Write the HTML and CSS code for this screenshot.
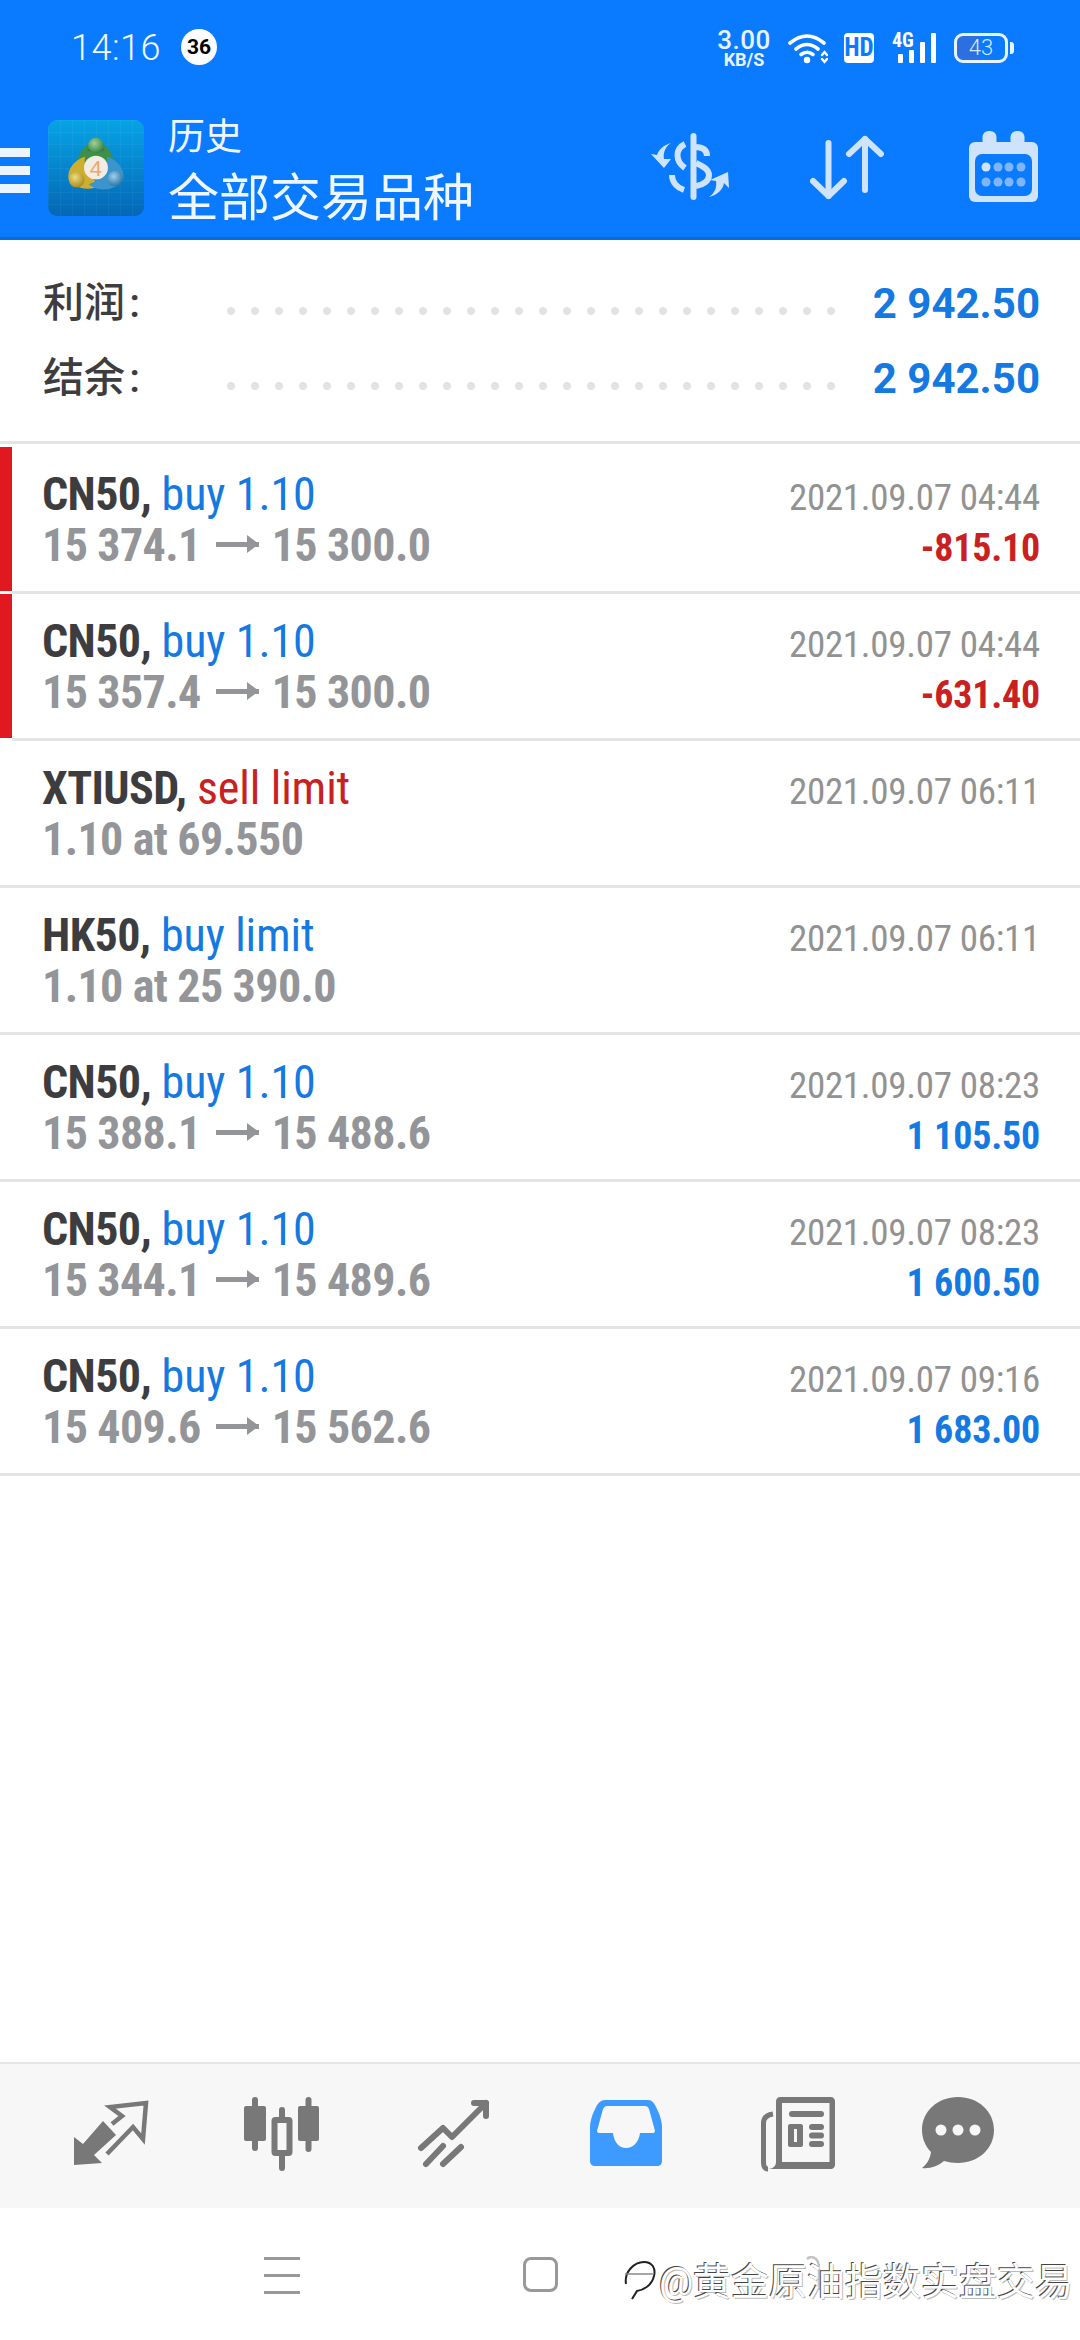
FILE: index.html
```html
<!doctype html>
<html lang="zh">
  <head>
    <meta charset="utf-8" />
    <meta name="viewport" content="width=device-width, initial-scale=1" />
    <title>历史</title>
    <link rel="stylesheet" href="styles.css">
  </head>
  <body>
    <header class="header">
      <div class="status-bar">
        <span class="clock">14:16</span>
        <span class="badge">36</span>
        <div class="status-icons">
          <div class="speed">
            <span class="speed-value">3.00</span>
            <span class="speed-unit">KB/S</span>
          </div>
          <svg class="wifi" width="40" height="31" viewBox="0 0 40 31" fill="none" stroke="#fff" stroke-width="3.6" stroke-linecap="round">
            <path d="M2 10Q19-4 36 10" />
            <path d="M8 16Q19 7 30 16" />
            <path d="M13 21.500Q19 17 25 21.500" />
            <circle cx="19" cy="27" r="3.200" fill="#fff" stroke="none" />
            <path d="M34 22l2.500-3 2.500 3M34 26l2.500 3 2.500-3" stroke-width="2.400" />
          </svg>
          <span class="hd">HD</span>
          <div class="signal">
            <span class="signal-label">4G</span>
            <span class="signal-bar bar-1"></span>
            <span class="signal-bar bar-2"></span>
            <span class="signal-bar bar-3"></span>
            <span class="signal-bar bar-4"></span>
          </div>
          <span class="battery">43</span>
        </div>
      </div>

      <div class="toolbar">
        <div class="menu-button">
          <span></span>
          <span></span>
          <span></span>
        </div>
        <svg class="app-logo" width="96" height="96" viewBox="0 0 96 96">
          <defs>
            <linearGradient id="tile" x1="0" y1="0" x2="0" y2="1">
              <stop offset="0" stop-color="#07a3e6" />
              <stop offset="1" stop-color="#0467b6" />
            </linearGradient>
            <pattern id="tileGrid" width="12" height="12" patternUnits="userSpaceOnUse">
              <path d="M12 0H0V12" fill="none" stroke="#fff" stroke-opacity="0.08" />
            </pattern>
            <radialGradient id="greenBall" cx="0.4" cy="0.35" r="0.7">
              <stop offset="0" stop-color="#9fd29a" />
              <stop offset="1" stop-color="#2f7f3c" />
            </radialGradient>
            <radialGradient id="yellowBall" cx="0.4" cy="0.35" r="0.7">
              <stop offset="0" stop-color="#efdc80" />
              <stop offset="1" stop-color="#a4881a" />
            </radialGradient>
            <radialGradient id="blueBall" cx="0.4" cy="0.35" r="0.7">
              <stop offset="0" stop-color="#9dd0ea" />
              <stop offset="1" stop-color="#1f6ea3" />
            </radialGradient>
          </defs>
          <rect width="96" height="96" rx="9" fill="url(#tile)" />
          <rect width="96" height="96" rx="9" fill="url(#tileGrid)" />
          <g transform="translate(3.800 3.500) scale(0.92)">
            <path d="M48 20C36 20 29 32 27 45 35 38 61 38 68 45 66 32 60 20 48 20Z" fill="#3f8f4a" />
            <path d="M36 36C24 40 17 50 18 60 24 72 44 74 55 66 42 62 34 50 36 36Z" fill="#cfae2c" />
            <path d="M60 36C72 40 79 50 78 60 72 72 52 76 40 66 54 62 62 50 60 36Z" fill="#3c94cc" />
            <path d="M39 28C44 31 52 31 57 28" fill="none" stroke="#0b5c8c" stroke-opacity="0.5" stroke-width="2" />
            <circle cx="48" cy="24" r="8.500" fill="url(#greenBall)" />
            <circle cx="27" cy="61" r="8.500" fill="url(#yellowBall)" />
            <circle cx="69" cy="60" r="8.500" fill="url(#blueBall)" />
            <circle cx="48" cy="48" r="13" fill="#f1ece4" />
            <text class="logo-digit" x="48" y="57" text-anchor="middle">4</text>
          </g>
        </svg>
        <div class="titles">
          <span class="title-small">历史</span>
          <span class="title-large">全部交易品种</span>
        </div>
        <div class="actions">
          <svg width="78" height="72" viewBox="0 0 78 72" fill="none" stroke="#cfe3fb" stroke-width="6">
            <path d="M42.500 5V66" stroke-linecap="round" />
            <path d="M44 16C52 16 56 19 56 25" />
            <path d="M34 13C24 18 24 30 34 37" />
            <path d="M45 32C54 36 58 39 58 44 58 50 52 54 45 55" />
            <path d="M21 44C21 52 27 57 33 59" />
            <path d="M20 12C14 16 12 22 13 28L20 28 13 37 0 23 6 24C7 20 12 14 20 12Z" fill="#cfe3fb" stroke="none" />
            <path d="M58 66C64 62 66 56 65 50L59 49 77 41 78 57 73 52C72 58 67 64 58 66Z" fill="#cfe3fb" stroke="none" />
          </svg>
          <svg width="74" height="72" viewBox="0 0 74 72" fill="none" stroke="#cfe3fb" stroke-width="6" stroke-linecap="round" stroke-linejoin="round">
            <path d="M18.500 12V65" />
            <path d="M3 50L18.500 65 34 50" />
            <path d="M55 8V59" />
            <path d="M39 23L55 8 71 23" />
          </svg>
          <svg width="69" height="72" viewBox="0 0 69 72">
            <rect y="11" width="69" height="60" rx="6" fill="#cfe3fb" />
            <rect x="6" y="23" width="57" height="42" rx="7" fill="#0a7bff" />
            <rect x="13.500" width="14" height="16" rx="6" fill="#cfe3fb" />
            <rect x="41.500" width="14" height="16" rx="6" fill="#cfe3fb" />
            <circle cx="17" cy="36" r="4.500" fill="#cfe3fb" />
            <circle cx="29" cy="36" r="4.500" fill="#7fb5fb" />
            <circle cx="40" cy="36" r="4.500" fill="#7fb5fb" />
            <circle cx="52" cy="36" r="4.500" fill="#7fb5fb" />
            <circle cx="17" cy="51" r="4.500" fill="#7fb5fb" />
            <circle cx="29" cy="51" r="4.500" fill="#7fb5fb" />
            <circle cx="40" cy="51" r="4.500" fill="#7fb5fb" />
            <circle cx="52" cy="51" r="4.500" fill="#7fb5fb" />
          </svg>
        </div>
      </div>
    </header>

    <main class="content">
      <section class="summary">
        <div class="summary-row">
          <span class="summary-label">利润 :</span>
          <span class="summary-dots"></span>
          <span class="summary-value">2 942.50</span>
        </div>
        <div class="summary-row">
          <span class="summary-label">结余 :</span>
          <span class="summary-dots"></span>
          <span class="summary-value">2 942.50</span>
        </div>
      </section>

      <ul class="trades">
        <li class="trade">
          <span class="flag flag-red"></span>
          <div class="trade-body">
            <div class="trade-line">
              <span class="trade-title"><b>CN50,</b> <span class="blue">buy 1.10</span></span>
              <span class="trade-time">2021.09.07 04:44</span>
            </div>
            <div class="trade-line">
              <span class="trade-price">15 374.1<i class="arrow"></i>15 300.0</span>
              <span class="trade-profit red">-815.10</span>
            </div>
          </div>
        </li>
        <li class="trade">
          <span class="flag flag-red"></span>
          <div class="trade-body">
            <div class="trade-line">
              <span class="trade-title"><b>CN50,</b> <span class="blue">buy 1.10</span></span>
              <span class="trade-time">2021.09.07 04:44</span>
            </div>
            <div class="trade-line">
              <span class="trade-price">15 357.4<i class="arrow"></i>15 300.0</span>
              <span class="trade-profit red">-631.40</span>
            </div>
          </div>
        </li>
        <li class="trade">
          <span class="flag"></span>
          <div class="trade-body">
            <div class="trade-line">
              <span class="trade-title"><b>XTIUSD,</b> <span class="red">sell limit</span></span>
              <span class="trade-time">2021.09.07 06:11</span>
            </div>
            <div class="trade-line">
              <span class="trade-price">1.10 at 69.550</span>
            </div>
          </div>
        </li>
        <li class="trade">
          <span class="flag"></span>
          <div class="trade-body">
            <div class="trade-line">
              <span class="trade-title"><b>HK50,</b> <span class="blue">buy limit</span></span>
              <span class="trade-time">2021.09.07 06:11</span>
            </div>
            <div class="trade-line">
              <span class="trade-price">1.10 at 25 390.0</span>
            </div>
          </div>
        </li>
        <li class="trade">
          <span class="flag"></span>
          <div class="trade-body">
            <div class="trade-line">
              <span class="trade-title"><b>CN50,</b> <span class="blue">buy 1.10</span></span>
              <span class="trade-time">2021.09.07 08:23</span>
            </div>
            <div class="trade-line">
              <span class="trade-price">15 388.1<i class="arrow"></i>15 488.6</span>
              <span class="trade-profit blue">1 105.50</span>
            </div>
          </div>
        </li>
        <li class="trade">
          <span class="flag"></span>
          <div class="trade-body">
            <div class="trade-line">
              <span class="trade-title"><b>CN50,</b> <span class="blue">buy 1.10</span></span>
              <span class="trade-time">2021.09.07 08:23</span>
            </div>
            <div class="trade-line">
              <span class="trade-price">15 344.1<i class="arrow"></i>15 489.6</span>
              <span class="trade-profit blue">1 600.50</span>
            </div>
          </div>
        </li>
        <li class="trade">
          <span class="flag"></span>
          <div class="trade-body">
            <div class="trade-line">
              <span class="trade-title"><b>CN50,</b> <span class="blue">buy 1.10</span></span>
              <span class="trade-time">2021.09.07 09:16</span>
            </div>
            <div class="trade-line">
              <span class="trade-price">15 409.6<i class="arrow"></i>15 562.6</span>
              <span class="trade-profit blue">1 683.00</span>
            </div>
          </div>
        </li>
      </ul>
    </main>

    <nav class="tabs">
      <svg width="100" height="100" viewBox="0 0 100 100" fill="#787878" stroke="#787878">
        <path d="M14 79V51L23 58 43 35 56 49 34 69 42 77Z" stroke="none" />
        <path d="M52 38L62 30 50 21 86 17 83 53 73 41 47 68" fill="none" stroke-width="4.500" />
      </svg>
      <svg width="100" height="100" viewBox="0 0 100 100" fill="#787878" stroke="#787878" stroke-linecap="round">
        <path d="M23 14V62M50 24V82M76.500 14V63" stroke-width="6" />
        <rect x="12" y="20" width="22" height="35" rx="2" stroke="none" />
        <rect x="66" y="20" width="21" height="35" rx="2" stroke="none" />
        <rect x="42.500" y="34" width="15" height="33" rx="1" fill="#f7f7f7" stroke-width="6" />
      </svg>
      <svg width="100" height="100" viewBox="0 0 100 100" fill="none" stroke="#787878" stroke-width="6" stroke-linecap="round" stroke-linejoin="round">
        <path d="M17 62L39 42 48 51 82 17" />
        <path d="M70 17H82V30" />
        <path d="M22 78L39 60M39 78L57 61" />
      </svg>
      <svg width="100" height="100" viewBox="0 0 100 100">
        <path d="M29 14H72C76 14 78 17 80 21 84 29 86 35 86 42V75C86 78 84 80 81 80H19C16 80 14 78 14 75V42C14 35 16 29 20 21 22 17 25 14 29 14Z" fill="#3d9bff" />
        <path d="M31 20H69C71 20 72 21 73 23L79 45C79 46 78 47 77 47H64C63 56 57 62 50 62 43 62 38 56 37 47H23C22 47 21 46 21 45L27 23C28 21 29 20 31 20Z" fill="#f7f7f7" />
      </svg>
      <svg width="100" height="100" viewBox="0 0 100 100" fill="#787878">
        <path d="M25 28C18 29 15.500 33 15.500 37V76C15.500 79 16 83 20 83" fill="none" stroke="#787878" stroke-width="5" />
        <path d="M20 83H83C85 83 87 81 87 79V15C87 13 85 11 83 11H32C30 11 28 13 28 15V76C28 80 25 83 20 83ZM34 17H81.500V76H34Z" fill-rule="evenodd" />
        <rect x="41" y="25" width="35" height="6" rx="3" />
        <path d="M42 38H53C54 38 55 39 55 40V59C55 60 54 61 53 61H42C41 61 40 60 40 59V40C40 39 41 38 42 38ZM46 43V56H49V43Z" fill-rule="evenodd" />
        <rect x="61" y="38" width="15" height="6" rx="3" />
        <rect x="61" y="46.500" width="15" height="6" rx="3" />
        <rect x="61" y="55" width="15" height="6" rx="3" />
      </svg>
      <svg width="100" height="100" viewBox="0 0 100 100">
        <path d="M38 11C58 11 74 25 74 44 74 63 58 77 38 77 33 77 28 76 24 75 18 80 10 83 2 82 7 78 10 73 11 66 5 60 2 52 2 44 2 25 18 11 38 11Z" fill="#787878" />
        <circle cx="21" cy="44" r="5.500" fill="#f7f7f7" />
        <circle cx="38" cy="44" r="5.500" fill="#f7f7f7" />
        <circle cx="55" cy="44" r="5.500" fill="#f7f7f7" />
      </svg>
    </nav>

    <footer class="nav-bar">
      <div class="nav-menu">
        <span></span>
        <span></span>
        <span></span>
      </div>
      <span class="nav-home"></span>
      <svg class="nav-back" width="14" height="36" viewBox="0 0 14 36" fill="none" stroke="#c4c4c4" stroke-width="2.500">
        <path d="M1 3Q5-1 10 3Q13 6 13 12V34" />
      </svg>

      <!-- watermark sits over the nav buttons -->
      <div class="watermark">
        <svg width="32" height="40" viewBox="0 0 32 40" fill="none" stroke="#222" stroke-width="2">
          <path d="M2 24C0 12 10 2 20 2 28 2 32 8 30 16 28 25 20 30 13 31L8 39" />
          <path d="M1 14H30" stroke="#888" stroke-width="1.500" />
        </svg>
        <span class="watermark-text">@黄金原油指数实盘交易</span>
      </div>
    </footer>
  </body>
</html>
```

FILE: styles.css
```css
:root {
  --header-blue: #0a7bff;
  --icon-light: #cfe3fb;
  --text-dark: #3d3d3f;
  --text-gray: #939598;
  --time-gray: #929292;
  --blue: #1479e0;
  --red: #c92022;
  --border-color: #e4e4e4;
}

* {
  box-sizing: border-box;
}

body {
  margin: 0;
  width: 1080px;
  height: 2340px;
  display: flex;
  flex-direction: column;
  background: #fff;
  font-family: Roboto, 'Noto Sans CJK SC', sans-serif;
  overflow: hidden;
}

/* Header */
.header {
  height: 240px;
  background: var(--header-blue);
  border-bottom: 3px solid #0c6cd6;
  color: #fff;
}

.status-bar {
  height: 96px;
  display: flex;
  align-items: center;
  padding: 0 72px 0 71px;
}

.clock {
  font-size: 36px;
  font-weight: 300;
  letter-spacing: 0.5px;
  color: #f2f8ff;
}

.badge {
  width: 36px;
  height: 36px;
  margin: -2px 0 0 20px;
  border-radius: 50%;
  background: #fff;
  color: #000;
  font-size: 21px;
  font-weight: 700;
  line-height: 36px;
  text-align: center;
}

.status-icons {
  margin-left: auto;
  display: flex;
  align-items: center;
}

.speed {
  width: 54px;
  display: flex;
  flex-direction: column;
  align-items: center;
  font-weight: 500;
  color: #e8f3ff;
}

.speed-value {
  font-size: 26px;
  line-height: 22px;
  letter-spacing: 0.5px;
}

.speed-unit {
  font-size: 18px;
  font-weight: 700;
  line-height: 16px;
  margin-top: 1px;
}

.wifi {
  margin-left: 17px;
}

.hd {
  width: 30px;
  height: 30px;
  margin-left: 16px;
  border-radius: 4px;
  background: #fff;
  color: var(--header-blue);
  font-family: 'Roboto Condensed', sans-serif;
  font-size: 25px;
  font-weight: 700;
  line-height: 30px;
  text-align: center;
}

.signal {
  position: relative;
  width: 44px;
  height: 30px;
  margin-left: 18px;
}

.signal-label {
  position: absolute;
  left: 0;
  top: -3px;
  font-family: 'Roboto Condensed', sans-serif;
  font-size: 20px;
  font-weight: 700;
  line-height: 20px;
}

.signal-bar {
  position: absolute;
  bottom: 0;
  width: 5px;
  background: #fff;
  border-radius: 1px;
}

.bar-1 {
  left: 6px;
  height: 9px;
}

.bar-2 {
  left: 17px;
  height: 13px;
}

.bar-3 {
  left: 28px;
  height: 21px;
}

.bar-4 {
  left: 39px;
  height: 30px;
}

.battery {
  position: relative;
  width: 54px;
  height: 30px;
  margin-left: 18px;
  border: 3px solid #e8f3ff;
  border-radius: 9px;
  background: linear-gradient(90deg, #2b6fe0 45%, transparent 45%);
  color: #d6e8ff;
  font-size: 22px;
  font-weight: 300;
  line-height: 24px;
  text-align: center;
}

.battery::after {
  content: '';
  position: absolute;
  right: -9px;
  top: 6px;
  width: 4px;
  height: 12px;
  border-radius: 0 3px 3px 0;
  background: #e8f3ff;
}

.toolbar {
  height: 141px;
  display: flex;
  align-items: flex-start;
  padding: 24px 42px 0 0;
}

.menu-button {
  width: 30px;
  margin-top: 28px;
  display: flex;
  flex-direction: column;
  gap: 9px;
}

.menu-button span {
  height: 9px;
  background: #eaf5ff;
}

.app-logo {
  margin-left: 18px;
}

.logo-digit {
  font-family: 'Liberation Sans', sans-serif;
  font-size: 24px;
  fill: #eea868;
}

.titles {
  margin-left: 24px;
  display: flex;
  flex-direction: column;
  color: #eef7ff;
}

.title-small {
  font-size: 37px;
  line-height: 48px;
  margin-top: -6px;
}

.title-large {
  margin-top: 3px;
  font-size: 51px;
  line-height: 68px;
}

.actions {
  margin: 11px 0 0 auto;
  display: flex;
  gap: 81px;
}

.actions svg:last-child {
  margin-left: 4px;
}

/* Summary */
.summary {
  height: 204px;
  padding: 26px 40px 0 43px;
  border-bottom: 3px solid var(--border-color);
}

.summary-row {
  height: 75px;
  display: flex;
  align-items: center;
  line-height: 75px;
}

.summary-label {
  width: 176px;
  font-size: 41px;
  font-weight: 500;
  word-spacing: -6px;
  color: var(--text-dark);
}

.summary-dots {
  width: 624px;
  height: 75px;
  background: radial-gradient(circle, #e2e2e2 3.5px, transparent 4.5px) 0 33px / 24px 24px repeat-x;
}

.summary-value {
  margin-left: auto;
  font-size: 42px;
  font-weight: 700;
  color: var(--blue);
}

/* Trades */
.content {
  flex: 1;
}

.trades {
  list-style: none;
  margin: 3px 0 0;
  padding: 0;
}

.trade {
  display: flex;
  height: 147px;
  font-family: 'Roboto Condensed', sans-serif;
}

.flag {
  width: 12px;
  border-bottom: 3px solid var(--border-color);
}

.flag-red {
  background: #e0181f;
  background-clip: padding-box;
  border-bottom-color: #fff;
}

.trade-body {
  flex: 1;
  padding: 22px 40px 0 30px;
  border-bottom: 3px solid var(--border-color);
}

.trade-line {
  height: 51px;
  display: flex;
  justify-content: space-between;
  align-items: baseline;
  line-height: 51px;
}

.trade-title {
  font-size: 46px;
  letter-spacing: -0.1px;
}

.trade-title b {
  color: var(--text-dark);
  letter-spacing: -0.6px;
}

.trade-price {
  font-size: 46px;
  font-weight: 700;
  letter-spacing: -0.6px;
  color: var(--text-gray);
}

.arrow {
  display: inline-block;
  position: relative;
  width: 43px;
  height: 5px;
  margin: 0 13px 0 15px;
  background: var(--text-gray);
  vertical-align: 14px;
}

.arrow::after {
  content: '';
  position: absolute;
  right: 0;
  top: -7px;
  border-left: 12px solid var(--text-gray);
  border-top: 9.500px solid transparent;
  border-bottom: 9.500px solid transparent;
}

.trade-time {
  font-size: 37px;
  letter-spacing: -0.3px;
  color: var(--time-gray);
}

.trade-profit {
  font-size: 38px;
  font-weight: 700;
  letter-spacing: -0.2px;
}

.blue {
  color: var(--blue);
}

.red {
  color: var(--red);
}

/* Bottom tabs */
.tabs {
  height: 146px;
  padding-left: 60px;
  display: flex;
  align-items: center;
  gap: 72px;
  background: #f7f7f7;
  border-top: 2px solid #e6e6e6;
}

.nav-bar {
  position: relative;
  height: 132px;
  padding: 49px 0 0 264px;
  display: flex;
  align-items: flex-start;
  background: #fff;
}

.nav-menu {
  width: 36px;
  display: flex;
  flex-direction: column;
  gap: 14px;
}

.nav-menu span {
  height: 3px;
  background: #999;
}

.nav-home {
  width: 35px;
  height: 35px;
  margin-left: 223px;
  border: 3px solid #999;
  border-radius: 8px;
}

.nav-back {
  margin-left: 248px;
  margin-top: -1px;
}

.watermark {
  position: absolute;
  left: 624px;
  top: 52px;
  display: flex;
  align-items: flex-start;
  gap: 3px;
}

.watermark-text {
  font-size: 38px;
  line-height: 44px;
  color: #fff;
  text-shadow: -1px -1px 0 #444, 1px 1px 0 #bbb;
}
```
